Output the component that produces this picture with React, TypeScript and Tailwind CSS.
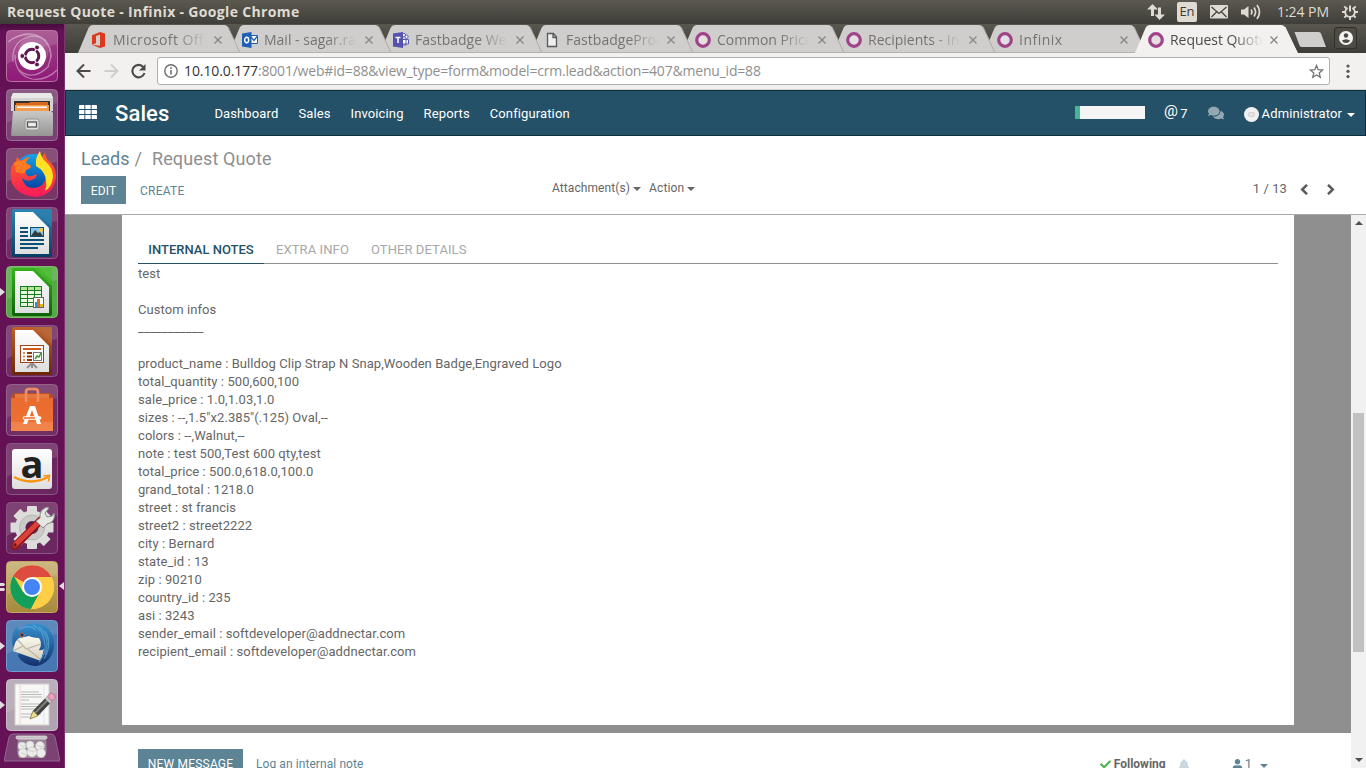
import React from "react";
import { FaCheck, FaBell, FaUser, FaComments } from "react-icons/fa";

const UBUNTU = "font-['Open_Sans','Noto_Sans',sans-serif]";

/* ---------- system tray ---------- */

function TopBar() {
  return (
    <header className={`flex h-6 w-full shrink-0 items-center bg-linear-to-b from-[#5b594f] to-[#3f3e39] pl-[7px] pr-2 text-[#dfdbd2] ${UBUNTU}`}>
      <h1 className="whitespace-nowrap text-[14px] leading-6 font-bold tracking-[0.34px]">Request Quote - Infinix - Google Chrome</h1>
      <div className="ml-auto flex h-6 items-center">
        <svg className="h-[18px] w-[18px]" viewBox="0 0 18 18" fill="#dfdbd2">
          <path d="M5.5 1 11 6.5H7V13H4V6.500H0z" />
          <path d="M12.500 17 7.500 11.500H11V4.500h3v7h4z" />
        </svg>
        <span className="ml-[12px] flex h-5 w-5 items-center justify-center rounded-[2px] bg-[#dfdbd2] text-[13px] text-[#3c3b37]">En</span>
        <svg className="ml-[13px] h-3.5 w-[18px]" viewBox="0 0 18 14">
          <rect width="18" height="13.500" rx="1" fill="#dfdbd2" />
          <path d="M1.500 2 9 8.500 16.500 2M1.500 12 6.500 7M16.500 12l-5-5" fill="none" stroke="#45443e" strokeWidth="1.300" />
        </svg>
        <svg className="ml-[13px] h-4 w-[21px]" viewBox="0 0 21 16">
          <path d="M0 5.500h3L7.500 2v12L3 10.500H0z" fill="#dfdbd2" />
          <path d="M10 5.500q1.800 2.500 0 5M13 3.500q3.200 4.500 0 9M16 1q5 7 0 14" fill="none" stroke="#dfdbd2" strokeWidth="1.700" />
        </svg>
        <span className="ml-[15px] w-[53px] whitespace-nowrap text-[14px] leading-6 tracking-[-0.05px]">1:24 PM</span>
        <svg className="ml-3 h-4 w-4" viewBox="0 0 16 16" fill="none" stroke="#dfdbd2">
          <path d="M5.600 4A4.800 4.800 0 1 0 10.400 4" strokeWidth="1.800" />
          <path d="M8 1.500v6" strokeWidth="2" />
          <path d="M0 8h3M13 8h3M8 13v3M2.300 2.300l2.200 2.200M13.700 2.300l-2.200 2.200M2.300 13.700l2.200-2.200M13.700 13.700l-2.200-2.200" strokeWidth="1.900" />
        </svg>
      </div>
    </header>
  );
}

/* ---------- launcher ---------- */

function Gloss() {
  return <path d="M1 4a3 3 0 0 1 3-3h44a3 3 0 0 1 3 3v10Q26 18 1 34z" fill="#fff" opacity=".13" />;
}

function Tile({ fill, edge, children }: { fill: string; edge: string; children: React.ReactNode }) {
  return (
    <svg className="block h-[52px] w-[52px] shrink-0" viewBox="0 0 52 52">
      <rect x=".5" y=".5" width="51" height="51" rx="4" fill={fill} stroke={edge} />
      <Gloss />
      {children}
    </svg>
  );
}

function UbuntuTile() {
  return (
    <Tile fill="url(#dash)" edge="#b973a3">
      <g fill="none" stroke="#fff" strokeWidth="1.200" opacity=".4">
        <path d="M2 12Q22-3 39 10 49 22 42 36" />
        <path d="M7 32Q5 10 26 6q18 0 19 22" />
        <path d="M9 25q0 20 17 24 14 2 25-9" />
        <path d="M13 40q14 12 30-4" />
      </g>
      <path d="M2 12Q22-3 39 10 46 20 40 30L13 28Q10 10 26 6 12 5 2 12z" fill="#fff" opacity=".15" />
      <circle cx="26" cy="26" r="14" fill="#fff" />
      <circle cx="26" cy="26" r="6.800" fill="none" stroke="#5f1750" strokeWidth="3" />
      <g stroke="#fff" strokeWidth="1.200">
        <path d="M26 26h-9M26 26l5-8M26 26l5 8" />
      </g>
      <circle cx="26" cy="26" r="5" fill="#fff" />
      <g fill="#5f1750" stroke="#fff" strokeWidth=".8">
        <circle cx="16.300" cy="26" r="2.400" />
        <circle cx="31" cy="17.500" r="2.400" />
        <circle cx="31" cy="34.500" r="2.400" />
      </g>
    </Tile>
  );
}

function FilesTile() {
  return (
    <Tile fill="#7a4272" edge="#9b6c94">
      <path d="M7 4h38l2 5v13H5V9z" fill="#d4d4d2" />
      <path d="M7 4h38l2 5H5z" fill="#e8e8e6" />
      <rect x="8" y="12" width="36" height="11" fill="#38302c" />
      <path d="M10 14h13l1-1h18v9H9z" fill="#d5691e" />
      <path d="M9 16h34v6H9z" fill="#f49a4e" />
      <path d="M11 17.500h30v1.500H11z" fill="#fff" />
      <path d="M7 22h38l2 2v22l-1 1H6l-1-1z" fill="url(#steel)" />
      <rect x="19" y="30" width="14" height="11" rx="2.500" fill="#dedede" stroke="#969696" />
      <rect x="21.500" y="33" width="9" height="5" fill="#eee" stroke="#555" strokeWidth="1.300" />
    </Tile>
  );
}

function FirefoxTile() {
  return (
    <Tile fill="#763666" edge="#96658e">
      <circle cx="27" cy="25" r="19" fill="url(#fxblue)" />
      <path d="M5 21Q6 16 10 13L11 9l4 4q6-4 9-4-4 3-4 6 1 2 5 3 0 2-5 4-1 4 2 6 4 1 8-2 2 2-2 5-6 4-12-1 2 10 12 10 11-1 12-12 0-6-5-10-1-8 4-13 1 7 6 10 5 5 5 14-2 18-20 20Q9 47 5 32 4 26 5 21z" fill="url(#fxfire)" />
      <path d="M30 18q-1-9 4-15 1 7 6 11 7 6 7 15-1 10-8 14 2-5 1-11-1-9-10-14z" fill="#ffe226" />
      <path d="M8 15q4-3 7-2 6-4 9-4-4 3-4 6l5 3q0 2-5 4l-2 4-8-2z" fill="#ff7a22" />
    </Tile>
  );
}

function DocTile({ kind }: { kind: "writer" | "calc" | "impress" }) {
  const main = kind === "writer" ? "url(#wr)" : kind === "calc" ? "url(#ca)" : "url(#im)";
  const light = kind === "writer" ? "#2d7fae" : kind === "calc" ? "#54bb3b" : "#b9683a";
  const tile = kind === "calc" ? "#55aa45" : "#6d2d63";
  return (
    <Tile fill={tile} edge={kind === "calc" ? "#78bf66" : "#8d5788"}>
      <rect x="6" y="2" width="40" height="48" rx="2" fill={main} />
      <path d="M28 2h16a2 2 0 0 1 2 2v16z" fill={light} opacity=".65" />
      <path d="M34 2h12v12q-7-4-12-12z" fill={light} />
      <path d="M9 5h18l16 16v26H9z" fill="url(#paper)" />
      {kind === "writer" && (
        <g>
          <path d="M14 21h8M14 25h8M14 29h8M14 33h24M14 37h24M14 41h18" stroke="#0c5078" strokeWidth="2" />
          <rect x="24.500" y="20.500" width="13" height="9" fill="#8cc5ea" stroke="#0c5078" />
          <circle cx="35" cy="23" r="2" fill="#ffc62b" />
          <path d="m25 29 4-6 3 3 2-1 3 4z" fill="#353d3c" />
        </g>
      )}
      {kind === "calc" && (
        <g>
          <rect x="14" y="20" width="22" height="21" fill="#177b1e" />
          {[0, 1, 2, 3, 4].map((r) => [0, 1, 2].map((c) => (
            <rect key={`${r}${c}`} x={15 + c * 7} y={21 + r * 4} width="6" height="3" fill={r ? "#e8f7df" : "#b4e69b"} />
          )))}
          <rect x="27.500" y="31.500" width="10" height="10" fill="#fff" stroke="#666" />
          <path d="M29 36h2v5h-2z" fill="#278fdb" />
          <path d="M31 33h3v8h-3z" fill="#dd6c1d" />
          <path d="M34 38h3v3h-3z" fill="#e4b40e" />
        </g>
      )}
      {kind === "impress" && (
        <g>
          <path d="m21 43 5-5 5 5M26 38v5" stroke="#909090" strokeWidth="2" fill="none" />
          <rect x="14.500" y="20.500" width="23" height="17" fill="#fff" stroke="#a04318" />
          <path d="M17 24h18" stroke="#d35b1c" strokeWidth="2" />
          <path d="M17 28h2M17 31.500h2M17 35h2" stroke="#e28a58" strokeWidth="2" />
          <path d="M21 28h5M21 31.500h5M21 35h5" stroke="#933410" strokeWidth="2" />
          <rect x="27.500" y="27.500" width="8" height="8" fill="#fff" stroke="#777" />
          <path d="m29 34 2-3 2 1 2-4" fill="none" stroke="#3e9d32" strokeWidth="1.500" />
        </g>
      )}
    </Tile>
  );
}

function SoftwareTile() {
  return (
    <Tile fill="#713064" edge="#92628c">
      <path d="M5 12l3-3h36l3 3v6H5z" fill="#b94d24" />
      <path d="M9 10h34v4H9z" fill="#e4763f" />
      <path d="M5 14h42v33H5z" fill="url(#bag)" />
      <path d="M20 18V8q0-3 3-3h6q3 0 3 3v10" fill="none" stroke="#ed8f62" strokeWidth="2.600" />
      <path d="M5 38h42v9H5z" fill="#fff" opacity=".12" />
      <path d="M24 22h5l6 18h-4l-5-14-5 14h-4z" fill="#fff" />
      <path d="M18.500 34h15" stroke="#fff" strokeWidth="3.600" strokeLinecap="round" />
      <path d="M18 34h11" stroke="#ed6b2f" strokeWidth="1.500" />
    </Tile>
  );
}

function AmazonTile() {
  return (
    <div className="relative flex h-[52px] w-[52px] shrink-0 items-center justify-center">
      <div className="absolute inset-0">
        <Tile fill="#6b2860" edge="#885681">
          <rect x="6" y="6" width="40" height="40" rx="3" fill="url(#paper)" />
          <path d="M8 34q17 9 34 0" fill="none" stroke="#f7930c" strokeWidth="2.300" />
          <path d="m37.500 33 6-.5-1 6" fill="none" stroke="#f7930c" strokeWidth="1.600" />
        </Tile>
      </div>
      <span className="relative -top-1.5 font-['Open_Sans',sans-serif] text-[38px] leading-[52px] font-bold text-[#222]">a</span>
    </div>
  );
}

function SettingsTile() {
  return (
    <Tile fill="#6b2860" edge="#885681">
      <g fill="#dcdcda">
        {[0, 45, 90, 135].map((a) => (
          <rect key={a} x="21" y="4" width="10" height="43" rx="1" transform={`rotate(${a} 26 25.500)`} />
        ))}
        <circle cx="26" cy="25.500" r="17" />
      </g>
      <circle cx="26" cy="25.500" r="12.500" fill="#cacac8" stroke="#b5b5b3" />
      <circle cx="26" cy="25.500" r="6.500" fill="#5c1e51" />
      <path d="M35 18 9 44" stroke="#8f1616" strokeWidth="7.500" strokeLinecap="round" />
      <path d="M34 19 9 43" stroke="#dc403b" strokeWidth="5" strokeLinecap="round" />
      <path d="M30 19l4-3q-1-8 7-11l2 1-4 5 2 4 5-1 2-3q2 9-7 11l-4 4z" fill="#e6e7e5" stroke="#8b8d8a" />
      <circle cx="9" cy="43" r="1.700" fill="#621b19" />
    </Tile>
  );
}

function ChromeTile() {
  return (
    <Tile fill="url(#gold)" edge="#c2a865">
      <circle cx="26" cy="26" r="22" fill="#ffce44" />
      <path d="M26 26 7 15A22 22 0 0 1 45.500 16H26z" fill="#dc4c40" />
      <path d="M7.500 14.500 17 31l9-5 8 5-9 17A22 22 0 0 1 7.500 14.500z" fill="#139e59" />
      <path d="M26 16h19.500A22 22 0 0 1 25 48l9-17z" fill="#ffce44" />
      <circle cx="26" cy="26" r="10" fill="#fff" />
      <circle cx="26" cy="26" r="8" fill="#4385f4" />
    </Tile>
  );
}

function ThunderbirdTile() {
  return (
    <Tile fill="#4778b4" edge="#719bca">
      <path d="M22 5q14-4 22 8 8 14-1 26-6 7-15 7Q16 44 12 36z" fill="url(#bird)" />
      <path d="m10 19 22-5 8 8-5 19-28-10z" fill="url(#letter)" />
      <path d="m11 19 9 10 18-6M7 31l10-5M22 29l13 11" fill="none" stroke="#bdb7a8" strokeWidth="1.200" />
      <path d="M7 28Q4 12 12 6q-1 4 2 5 3-7 13-8 13 0 19 11 5 13-3 23-6 9-16 9 10-6 11-17-3 2-5 1 4-6 0-12-8 0-14-4-8 3-12 13z" fill="url(#bird)" />
      <path d="M15 9q8-5 15 1M27 5q10 5 11 15 4 11-5 22M33 7q12 10 6 28M39 11q8 13-1 28" fill="none" stroke="#65b5e5" strokeWidth="1.200" opacity=".6" />
      <circle cx="16" cy="15" r="2" fill="#17335f" stroke="#c06036" />
    </Tile>
  );
}

function EditorTile() {
  return (
    <Tile fill="#b0a4b0" edge="#c8bdc8">
      <path d="M9 5h34v41H9z" fill="#f7f7f5" stroke="#d0d0ce" />
      <path d="M14 6v39" stroke="#f6cfcf" />
      <path d="M38 6v39" stroke="#dbe6f1" />
      <path d="M15 13h18M15 15.500h21M15 18h21M15 21h8M15 25h21M15 27.500h20M15 30h18M15 35h20M15 38h9" stroke="#b9b9b7" />
      <g transform="rotate(-46 24 40)">
        <path d="M32 36.500h20v7H32z" fill="#41423f" />
        <path d="M32 38.500h20v2H32z" fill="#80827d" />
        <path d="m32 36.500-8 3.500 8 3.500z" fill="#ece08e" stroke="#746c37" strokeWidth=".7" />
        <path d="M49 36.500h3v7h-3z" fill="#c6c6c4" />
        <rect x="52" y="36.500" width="6" height="7" rx="2" fill="#e7a1bd" stroke="#ad6384" strokeWidth=".7" />
      </g>
    </Tile>
  );
}

function TrashTile() {
  return (
    <svg className="mt-0.5 -ml-0.5 block h-[31px] w-14 shrink-0" viewBox="0 0 56 31">
      <path d="M9 1h38q3 0 4 3l5 24H0L5 4q1-3 4-3z" fill="#7a4373" stroke="#936490" />
      <path d="M14 6q-2 14 1 19h25q4-5 2-19z" fill="#a398a3" opacity=".75" />
      <g fill="#ececea" stroke="#c2c2c0" strokeWidth=".7">
        <circle cx="18" cy="13" r="4" />
        <circle cx="26" cy="12" r="4" />
        <circle cx="36" cy="13" r="4.500" />
        <circle cx="19" cy="20" r="4.500" />
        <circle cx="37" cy="20" r="4.500" />
        <circle cx="28" cy="19" r="5" />
        <path d="m16 12 4 2 3-2M25 17l4 2 4-3M17 20l4 1 2 3M33 12l4 2 3-1" fill="none" />
      </g>
      <rect x="12" y="3" width="31" height="3" rx="1.500" fill="#c4bfc5" stroke="#eee" strokeWidth=".7" />
    </svg>
  );
}

function Pip({ count = 1 }: { count?: number }) {
  return (
    <svg className="absolute top-[18px] -left-1.5 h-4 w-[5px]" viewBox="0 0 5 16" fill="#e2dce1">
      {count === 1 ? <path d="M0 4l5 4-5 4z" /> : <path d="M0 4h4l1 1.500L4 7H0zM0 9h4l1 1.500L4 12H0z" />}
    </svg>
  );
}

function Defs() {
  const stops: [string, string, string][] = [
    ["dash", "#a04685", "#8e1a78"],
    ["steel", "#c9c9c7", "#969694"],
    ["wr", "#2e85b5", "#063e63"],
    ["ca", "#35b31c", "#0d610b"],
    ["im", "#bf622c", "#6c2605"],
    ["paper", "#ffffff", "#dedede"],
    ["bag", "#e96b2e", "#ee7332"],
    ["gold", "#c7ae72", "#a8893c"],
    ["bird", "#3593d0", "#15306e"],
    ["letter", "#fffdf5", "#d4cebc"],
    ["fxblue", "#13a4ec", "#083b9a"],
    ["fxfire", "#ff6a1c", "#f9195c"],
  ];
  return (
    <svg className="absolute h-0 w-0">
      <defs>
        {stops.map(([id, a, b]) => (
          <linearGradient key={id} id={id} x1="0" y1="0" x2="0" y2="1">
            <stop offset="0" stopColor={a} />
            <stop offset="1" stopColor={b} />
          </linearGradient>
        ))}
      </defs>
    </svg>
  );
}

function Launcher() {
  const apps: [React.ReactNode, number][] = [
    [<UbuntuTile />, 0],
    [<FilesTile />, 0],
    [<FirefoxTile />, 0],
    [<DocTile kind="writer" />, 0],
    [<DocTile kind="calc" />, 1],
    [<DocTile kind="impress" />, 0],
    [<SoftwareTile />, 0],
    [<AmazonTile />, 0],
    [<SettingsTile />, 0],
    [<ChromeTile />, 2],
    [<ThunderbirdTile />, 1],
    [<EditorTile />, 1],
  ];
  return (
    <aside className="flex w-[65px] shrink-0 flex-col border-r border-[#7b3470] bg-[#641155] bg-linear-to-b from-[#480c3d] to-[#641155] to-[8px] pt-1.5 pl-1.5">
      <Defs />
      <div className="flex flex-col gap-[7px]">
        {apps.map(([icon, pips], i) => (
          <div key={i} className="relative h-[52px]">
            {icon}
            {pips > 0 && <Pip count={pips} />}
            {pips === 2 && (
              <svg className="absolute top-[21px] left-[53px] h-2 w-[5px]" viewBox="0 0 5 8" fill="#e2dce1">
                <path d="M5 0v8L0 4z" />
              </svg>
            )}
          </div>
        ))}
      </div>
      <TrashTile />
    </aside>
  );
}

/* ---------- browser ---------- */

function Ring() {
  return (
    <svg className="h-4 w-4" viewBox="0 0 16 16">
      <circle cx="8" cy="8" r="6.300" fill="#e4dfe2" stroke="#9f4488" strokeWidth="3.200" />
    </svg>
  );
}

function OfficeIcon() {
  return (
    <svg className="h-4 w-4" viewBox="0 0 16 16">
      <path d="M1 3.200 9 0l5 1.500v13L9 16 1 12.700l8 1V2.800L5 4v7.300l-4 1.400z" fill="#dc3a1e" />
    </svg>
  );
}

function OutlookIcon() {
  return (
    <svg className="h-4 w-4" viewBox="0 0 16 16">
      <path d="M8.500 3.500h7v8h-7z" fill="#fff" stroke="#1f5fb5" />
      <path d="m9 5 3 3.500L15.500 4" fill="none" stroke="#1f5fb5" strokeWidth="1.300" />
      <path d="M0 1.500 9.500 0v16L0 14.500z" fill="#1f5fb5" />
      <ellipse cx="4.700" cy="8" rx="2" ry="2.700" fill="none" stroke="#fff" strokeWidth="1.400" />
    </svg>
  );
}

function TeamsIcon() {
  return (
    <svg className="h-4 w-4" viewBox="0 0 16 16">
      <circle cx="13.500" cy="4.700" r="1.600" fill="#fff" stroke="#5558af" />
      <circle cx="10.800" cy="3" r="1.700" fill="#fff" stroke="#5558af" />
      <path d="M9 7.500h6.500V12H9zM9 7.500h4V13H9z" fill="#fff" stroke="#5558af" />
      <path d="M0 1.500 10 0v16L0 14.500z" fill="#5552b0" />
      <path d="M2.500 5.500h5M5 5.500V11" stroke="#fff" strokeWidth="1.500" />
    </svg>
  );
}

function PageIcon() {
  return (
    <svg className="h-4 w-4" viewBox="0 0 16 16">
      <path d="M3.500 1.500h6l3 3.500v9.500h-9zM9 1.500V5.500h3.500" fill="#eee" stroke="#5a5a5a" strokeWidth="1.300" />
    </svg>
  );
}

const TABS: { icon: React.ReactNode; title: string; z: string; spacing: string }[] = [
  { icon: <OfficeIcon />, title: "Microsoft Office", z: "z-[8]", spacing: "tracking-[0.4px]" },
  { icon: <OutlookIcon />, title: "Mail - sagar.rana", z: "z-[7]", spacing: "tracking-normal" },
  { icon: <TeamsIcon />, title: "Fastbadge Web", z: "z-[6]", spacing: "tracking-normal" },
  { icon: <PageIcon />, title: "FastbadgeProduct", z: "z-[5]", spacing: "tracking-[0.03px]" },
  { icon: <Ring />, title: "Common Price", z: "z-[4]", spacing: "tracking-[-0.05px]" },
  { icon: <Ring />, title: "Recipients - Infinix", z: "z-[3]", spacing: "tracking-normal" },
  { icon: <Ring />, title: "Infinix", z: "z-[2]", spacing: "tracking-[0.5px]" },
  { icon: <Ring />, title: "Request Quote - Infinix", z: "z-[9]", spacing: "tracking-[-0.05px]" },
];

function TabStrip() {
  return (
    <div className="flex h-[29px] shrink-0 bg-linear-to-b from-[#59574e] to-[#3e3d38] pl-[13px]">
      {TABS.map((t, i) => {
        const active = i === 7;
        return (
          <div key={i} className={`relative h-[29px] w-[151px] shrink-0 ${t.z}`}>
            <svg className="absolute top-px left-0 h-7 w-[164px]" viewBox="0 0 164 28">
              <path d="M0 28 10.500 3Q12 0 15 0h131q3 0 4.500 3L163 28z" fill={active ? "#f2f1f0" : "#d0cecc"} />
              <path d="M150 2 162 28" stroke={active ? "#f2f1f0" : "#aeaba7"} />
              {!active && <path d="M0 27.500h163" stroke="#b4b1ae" />}
            </svg>
            <div className="relative flex h-[29px] items-center pt-0.5 pl-[13px]">
              {t.icon}
              <span
                className={`ml-1.5 w-[93px] overflow-hidden text-[14px] leading-[26px] whitespace-nowrap [mask-image:linear-gradient(to_right,#000_68%,transparent_100%)] ${UBUNTU} ${t.spacing} ${active ? "text-[#4b4b4b]" : "text-[#757371]"}`}
              >
                {t.title}
              </span>
              <svg className={`h-2 w-2 ${active ? "ml-[7px]" : "ml-2"}`} viewBox="0 0 8 8">
                <path d="m.5.500 7 7m0-7-7 7" stroke="#888" strokeWidth="1.400" />
              </svg>
            </div>
          </div>
        );
      })}
      <svg className="mt-2 ml-[8px] h-[15px] w-8" viewBox="0 0 32 15">
        <path d="M.5 0h24q2 0 2.500 1.500L32 15H8q-2 0-2.500-1.500z" fill="#d0cecc" />
      </svg>
      <div className="mt-[3px] ml-2 flex h-[22px] w-[23px] items-center justify-center rounded-[3px] border border-[#312f2b] bg-[#4d4b44]">
        <svg className="h-3.5 w-3.5" viewBox="0 0 14 14">
          <circle cx="7" cy="7" r="7" fill="#f5f4f2" />
          <circle cx="7" cy="4.500" r="2.200" fill="#4a4842" />
          <path d="M2.800 9.800q4.200-3 8.400 0Q9.500 12 7 12T2.800 9.800z" fill="#4a4842" />
        </svg>
      </div>
    </div>
  );
}

function Toolbar() {
  return (
    <div className="flex h-[37px] shrink-0 items-center border-b border-[#d5d3d1] bg-[#f2f1f0] pl-[11px]">
      <svg className="h-4 w-[15px]" viewBox="0 0 15 16" fill="none" stroke="#4b4b4b" strokeWidth="2">
        <path d="M14.500 8H1.500M8 1.500 1.500 8 8 14.500" />
      </svg>
      <svg className="ml-[13px] h-4 w-[15px]" viewBox="0 0 15 16" fill="none" stroke="#cfcecc" strokeWidth="2">
        <path d="M.5 8h13M7 1.500 13.500 8 7 14.500" />
      </svg>
      <svg className="ml-[12px] h-4 w-[15px]" viewBox="0 0 15 16">
        <path d="M12.500 4.300A6.200 6.200 0 1 0 13.500 10" fill="none" stroke="#4b4b4b" strokeWidth="2.100" />
        <path d="M14.500 1v6.500H8z" fill="#4b4b4b" />
      </svg>
      <div className="ml-[11px] flex h-[28px] w-[1173px] items-center rounded-[3px] border border-[#b1afad] bg-white pl-1.5">
        <svg className="h-3.5 w-3.5" viewBox="0 0 14 14">
          <circle cx="7" cy="7" r="6.200" fill="none" stroke="#6e6e6e" strokeWidth="1.400" />
          <path d="M7 6v4.500M7 3.300V5" stroke="#6e6e6e" strokeWidth="1.600" />
        </svg>
        <span className={`ml-[6px] text-[14px] leading-[26px] tracking-[-0.2px] whitespace-nowrap text-[#8f8f8f] ${UBUNTU}`}>
          <span className="tracking-[-0.1px] text-[#333]">10.10.0.177</span>:8001/web#id=88&amp;view_type=form&amp;model=crm.lead&amp;action=407&amp;menu_id=88
        </span>
        <svg className="mr-[5px] ml-auto h-[15px] w-[15px]" viewBox="0 0 15 15">
          <path d="m7.500 1.500 1.700 4.200 4.500.3-3.500 2.900 1.100 4.400-3.800-2.400-3.800 2.400 1.100-4.400L1.300 6l4.500-.3z" fill="none" stroke="#757575" strokeWidth="1.300" />
        </svg>
      </div>
      <svg className="ml-[16px] h-[15px] w-1" viewBox="0 0 4 15" fill="#555">
        <circle cx="2" cy="2" r="1.600" />
        <circle cx="2" cy="7.300" r="1.600" />
        <circle cx="2" cy="12.600" r="1.600" />
      </svg>
    </div>
  );
}

/* ---------- application ---------- */

function Caret({ className = "" }: { className?: string }) {
  return (
    <svg className={`h-1 w-2 shrink-0 ${className}`} viewBox="0 0 8 4" fill="currentColor">
      <path d="M0 0h8L4 4z" />
    </svg>
  );
}

function NavBar() {
  return (
    <nav className="flex h-[46px] shrink-0 items-center border border-[#0f2f3d] bg-[#245167] pl-[13px] text-[13px] tracking-[0.12px] text-white">
      <svg className="mb-[3px] h-3.5 w-[18px]" viewBox="0 0 18 14" fill="#fff">
        {[0, 5, 10].map((y) => [0, 6.3, 12.6].map((x) => <rect key={`${x}-${y}`} x={x} y={y} width="5.400" height="4" rx=".6" />))}
      </svg>
      <span className="mt-px ml-[18px] text-[22px] leading-[44px] font-medium tracking-[0.1px]">Sales</span>
      <div className="mt-px ml-[45px] flex gap-5">
        <a>Dashboard</a>
        <a>Sales</a>
        <a>Invoicing</a>
        <a>Reports</a>
        <a>Configuration</a>
      </div>
      <div className="mr-[10px] ml-auto flex items-center">
        <div className="mb-[2px] flex h-[13px] w-[70px] bg-[#f5f5f5]">
          <div className="w-[5px] bg-[#46b595]" />
        </div>
        <span className="mb-[2px] ml-[19px] text-[15.5px]">@</span>
        <span className="mt-px ml-[2px]">7</span>
        <FaComments className="ml-5 h-4 w-4 text-[#92a8b3]" />
        <span className="mt-[2px] ml-5 flex h-[15px] w-[15px] items-center justify-center rounded-full bg-[#f1f1f1]">
          <span className="h-[5px] w-[7px] rounded-[2px] border border-[#d2d2d2] bg-[#e4e4e4]" />
        </span>
        <span className="mt-px ml-[3px]">Administrator</span>
        <Caret className="mt-[3px] ml-[5px]" />
      </div>
    </nav>
  );
}

function ControlPanel() {
  return (
    <section className="flex h-[79px] shrink-0 flex-col border-b border-[#a9a9a9] bg-white px-4 pt-[11px] text-[13px] text-[#666]">
      <div className="flex h-6 items-center text-[18px] leading-6 text-[#8f8f8f]">
        <a className="text-[#5c8495]">Leads</a>
        <span className="ml-[5px]">/</span>
        <span className="ml-[10px] tracking-[0.14px]">Request Quote</span>
      </div>
      <div className="mt-[5px] flex h-7 items-center">
        <div className="flex w-[471px] items-center">
          <button className="h-7 w-[45px] bg-[#5c8495] pt-0.5 text-center text-[12px] tracking-[0.1px] text-white">EDIT</button>
          <button className="ml-[14px] pt-0.5 text-[12px] tracking-[0.25px] text-[#5c8495]">CREATE</button>
        </div>
        <div className="flex items-center pb-[5px]">
          <span className="text-[12px] tracking-[0.08px]">Attachment(s)</span>
          <Caret className="mt-[3px] ml-[3px]" />
          <span className="ml-2 text-[12px] tracking-[0.15px]">Action</span>
          <Caret className="mt-[3px] ml-[3px]" />
        </div>
        <div className="mr-[15px] ml-auto flex items-center pb-[3px]">
          <span className="tracking-[0.1px]">1 / 13</span>
          <svg className="mt-[2px] ml-[13px] h-[11px] w-2" viewBox="0 0 8 11" fill="none" stroke="#5a5a5a" strokeWidth="2.500">
            <path d="M7 .8 2.200 5.500 7 10.200" />
          </svg>
          <svg className="mt-[2px] ml-[19px] h-[11px] w-2" viewBox="0 0 8 11" fill="none" stroke="#5a5a5a" strokeWidth="2.500">
            <path d="m1 .8 4.800 4.700L1 10.200" />
          </svg>
        </div>
      </div>
    </section>
  );
}

const NOTES = [
  "test",
  "",
  "Custom infos",
  "___________",
  "",
  "product_name : Bulldog Clip Strap N Snap,Wooden Badge,Engraved Logo",
  "total_quantity : 500,600,100",
  "sale_price : 1.0,1.03,1.0",
  'sizes : --,1.5"x2.385"(.125) Oval,--',
  "colors : --,Walnut,--",
  "note : test 500,Test 600 qty,test",
  "total_price : 500.0,618.0,100.0",
  "grand_total : 1218.0",
  "street : st francis",
  "street2 : street2222",
  "city : Bernard",
  "state_id : 13",
  "zip : 90210",
  "country_id : 235",
  "asi : 3243",
  "sender_email : softdeveloper@addnectar.com",
  "recipient_email : softdeveloper@addnectar.com",
];

function FormSheet() {
  return (
    <div className="flex h-[518px] shrink-0 bg-[#8f8f8f] pr-[57px] pb-2 pl-[57px]">
      <div className="grow bg-white px-4 pt-5 text-[13px] text-[#666]">
        <div className="flex h-[29px] border-b border-[#8f8f8f] leading-[29px]">
          <span className="-mb-px w-[126px] border-b border-[#245167] text-center font-medium text-[#245167]">INTERNAL NOTES</span>
          <span className="ml-3 tracking-[0.1px] text-[#a8a8a8]">EXTRA INFO</span>
          <span className="ml-[22px] tracking-[0.08px] text-[#a8a8a8]">OTHER DETAILS</span>
        </div>
        <div className="pt-px tracking-[0.075px]">
          {NOTES.map((line, i) => (
            <p key={i} className="h-[18px] leading-[18px] whitespace-pre">{line}</p>
          ))}
        </div>
      </div>
    </div>
  );
}

function Chatter() {
  return (
    <div className="flex h-[35px] shrink-0 items-start overflow-hidden bg-white pt-4 pr-[83px] pl-[73px] text-[12px] leading-[28px] text-[#5c8495]">
      <button className="h-7 w-[105px] bg-[#5c8495] pt-px text-center tracking-[0.2px] text-white">NEW MESSAGE</button>
      <a className="mt-px ml-[13px] tracking-[0.08px]">Log an internal note</a>
      <div className="mt-px ml-auto flex items-center">
        <FaCheck className="mt-px h-[11px] w-[11px] text-[#4fb354]" />
        <span className="ml-[3px] font-bold text-[#666]">Following</span>
        <FaBell className="mt-[1px] ml-[12px] h-3 w-3 text-[#c9d8de]" />
        <FaUser className="mt-[1px] ml-[42px] h-[11px] w-[11px]" />
        <span className="ml-[2px] text-[13px]">1</span>
        <Caret className="mt-[3px] ml-[8px]" />
      </div>
    </div>
  );
}

function Scrollbar() {
  return (
    <div className="flex w-[15px] shrink-0 flex-col items-center bg-[#f1f1f1] text-[#4f4f4f]">
      <Caret className="mt-1.5 rotate-180" />
      <div className="mt-[188px] h-[239px] w-[11px] bg-[#c1c1c1]" />
      <Caret className="mt-auto mb-[6px]" />
    </div>
  );
}

export default function App() {
  return (
    <div className="flex h-[768px] w-[1366px] flex-col overflow-hidden bg-white">
      <TopBar />
      <div className="flex h-[744px]">
        <Launcher />
        <main className="flex w-[1301px] flex-col font-[Roboto,sans-serif]">
          <TabStrip />
          <Toolbar />
          <NavBar />
          <ControlPanel />
          <div className="flex h-[553px]">
            <div className="flex grow flex-col">
              <FormSheet />
              <Chatter />
            </div>
            <Scrollbar />
          </div>
        </main>
      </div>
    </div>
  );
}
